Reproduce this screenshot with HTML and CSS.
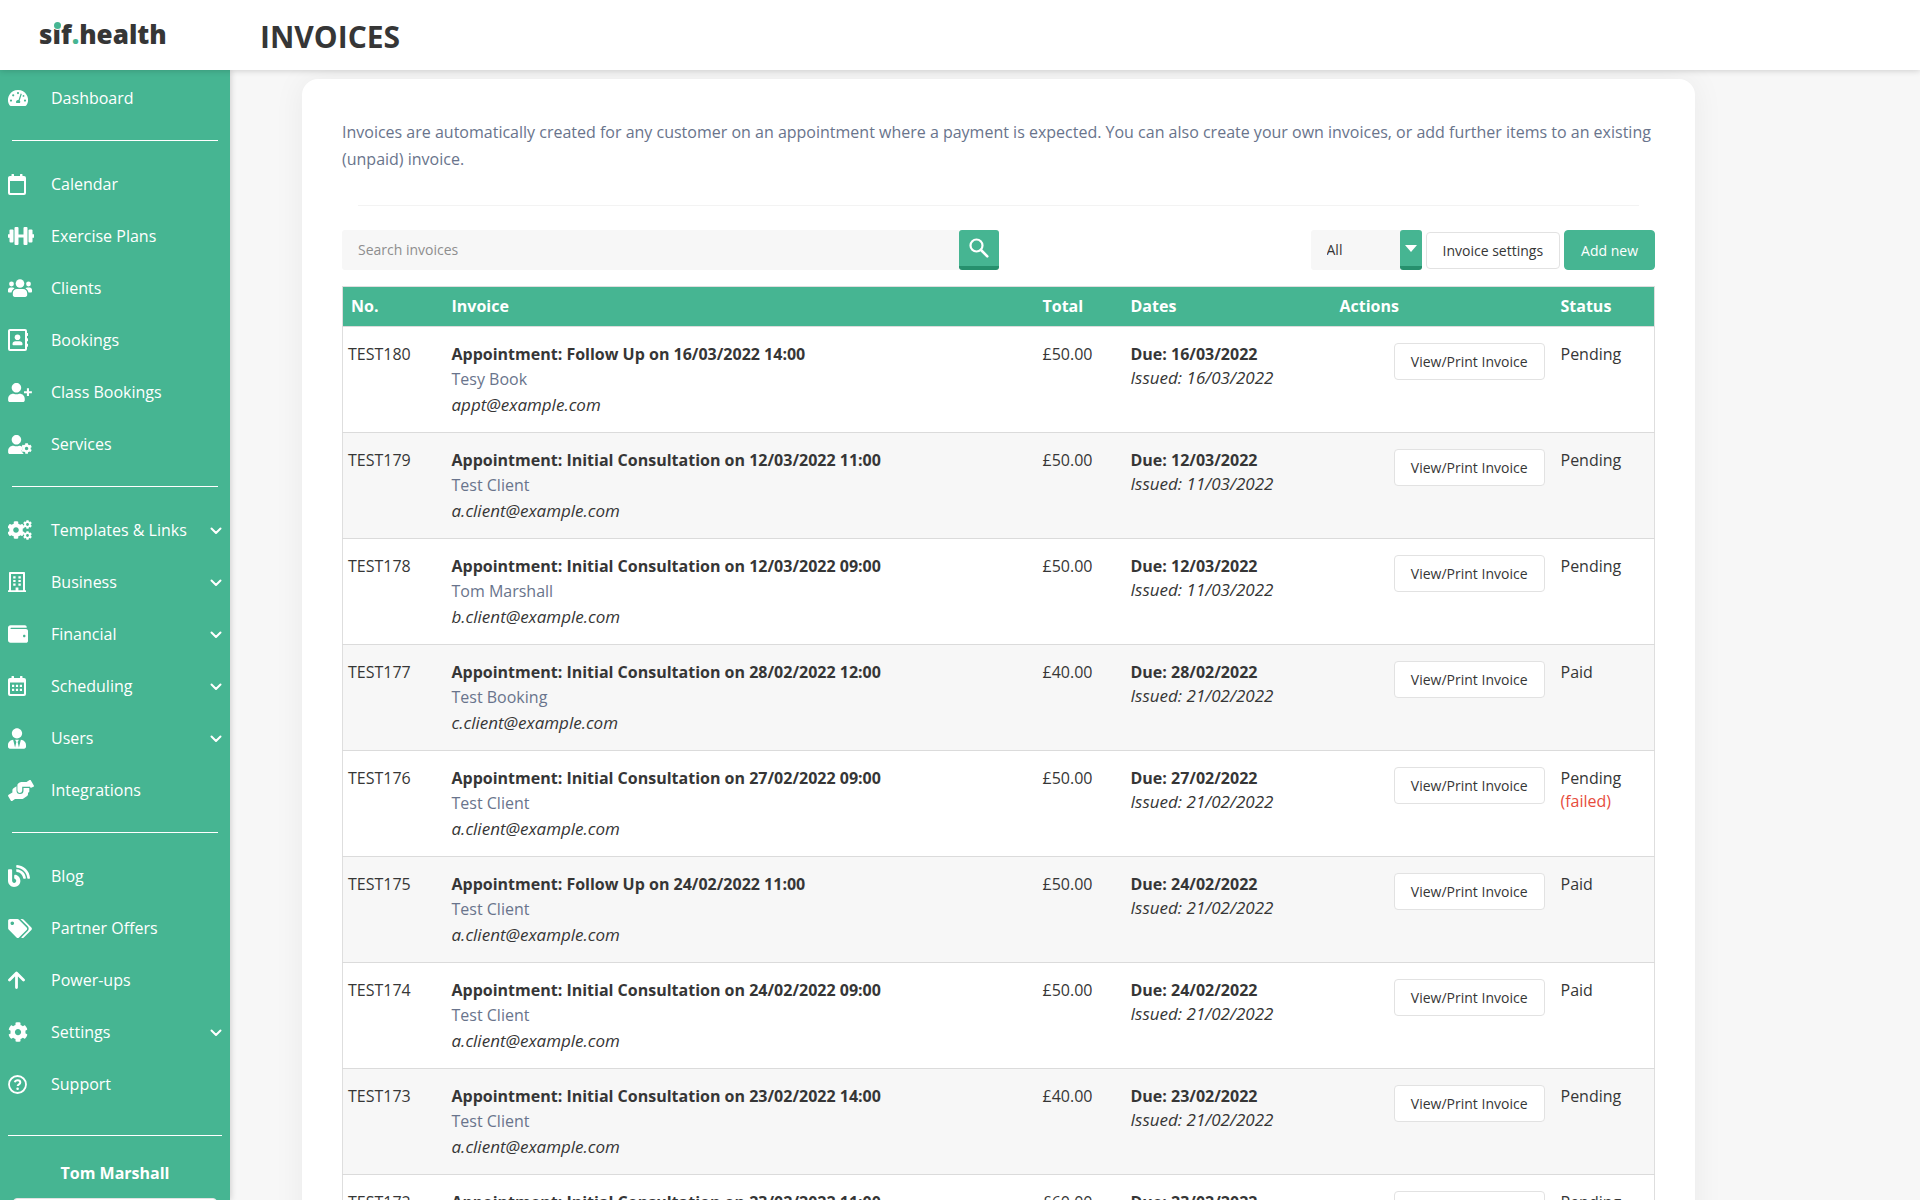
FILE: index.html
```
<!DOCTYPE html>
<html lang="en">
<head>
    <meta charset="UTF-8">
    <meta name="viewport" content="width=device-width, initial-scale=1.0">
    <title>Invoices - sif.health</title>
    <link rel="stylesheet" href="styles.css">
</head>
<body>
    <!-- Shared icon shapes -->
    <svg class="icon-defs" aria-hidden="true">
        <symbol id="i-cog" viewBox="0 0 512 512"><path d="M487.4 315.7l-42.6-24.6c4.3-23.2 4.3-47 0-70.2l42.6-24.6c4.9-2.8 7.1-8.6 5.5-14-11.1-35.6-30-67.8-54.7-94.6-3.8-4.1-10-5.1-14.8-2.3L380.8 110c-17.9-15.4-38.5-27.3-60.8-35.1V25.8c0-5.6-3.9-10.5-9.4-11.7-36.7-8.2-74.3-7.8-109.2 0-5.5 1.2-9.4 6.1-9.4 11.7V75c-22.2 7.9-42.8 19.8-60.8 35.1L88.7 85.5c-4.9-2.8-11-1.9-14.8 2.3-24.7 26.7-43.6 58.9-54.7 94.6-1.7 5.4.6 11.2 5.5 14L67.3 221c-4.3 23.2-4.3 47 0 70.2l-42.6 24.6c-4.9 2.8-7.1 8.6-5.5 14 11.1 35.6 30 67.8 54.7 94.6 3.8 4.1 10 5.1 14.8 2.3l42.6-24.6c17.9 15.4 38.5 27.3 60.8 35.1v49.2c0 5.6 3.9 10.5 9.4 11.7 36.7 8.2 74.3 7.8 109.2 0 5.5-1.2 9.4-6.1 9.4-11.7v-49.2c22.2-7.9 42.8-19.8 60.8-35.1l42.6 24.6c4.9 2.8 11 1.9 14.8-2.3 24.7-26.7 43.6-58.9 54.7-94.6 1.5-5.5-.7-11.3-5.6-14.1zM256 336c-44.1 0-80-35.9-80-80s35.9-80 80-80 80 35.9 80 80-35.9 80-80 80z"/></symbol>
        <symbol id="i-chevron" viewBox="0 0 12 8"><path d="M1.5 1.5L6 6l4.500-4.500" fill="none" stroke="currentColor" stroke-width="2" stroke-linecap="round" stroke-linejoin="round"/></symbol>
    </svg>

    <!-- Header -->
    <header class="app-header">
        <a href="#" class="logo">s<span class="logo-i">i</span>f<span class="logo-dot">.</span>health</a>
        <h1>INVOICES</h1>
    </header>

    <div class="layout">
        <!-- Sidebar -->
        <nav class="sidebar">
            <a href="#" class="nav-item">
                <svg width="20" height="16" viewBox="0 0 20 16"><path fill-rule="evenodd" d="M10 0a10 10 0 0 1 8.600 15.100c-.4.6-.8.9-1.400.9H2.800c-.6 0-1-.3-1.400-.9A10 10 0 0 1 10 0zM10 2a1.100 1.100 0 1 0 0 2.200 1.100 1.100 0 0 0 0-2.200zM5.200 4.200a1.100 1.100 0 1 0 0 2.200 1.100 1.100 0 0 0 0-2.200zM3 9.500a1.100 1.100 0 1 0 0 2.200 1.100 1.100 0 0 0 0-2.200zM17 9.500a1.100 1.100 0 1 0 0 2.200 1.100 1.100 0 0 0 0-2.200zM15.500 5a.9.9 0 1 0 0 1.800.9.9 0 0 0 0-1.800zM12.700 3.600l-2.200 6.500A2 2 0 0 0 8.300 13h3.600a2 2 0 0 0-.2-2.500L13.800 4z"/></svg>
                <span>Dashboard</span>
            </a>
            <hr>
            <a href="#" class="nav-item">
                <svg width="18" height="21" viewBox="0 0 18 21"><path fill-rule="evenodd" d="M4 0h1.500c.3 0 .5.2.5.5V2h6V.5c0-.3.2-.5.500-.5H14c.3 0 .5.2.5.5V2H16a2 2 0 0 1 2 2v15a2 2 0 0 1-2 2H2a2 2 0 0 1-2-2V4c0-1.100.9-2 2-2h1.500V.5c0-.3.200-.5.500-.5zM2 7v11.600c0 .2.200.4.400.4h13.200c.2 0 .4-.2.400-.4V7z"/></svg>
                <span>Calendar</span>
            </a>
            <a href="#" class="nav-item">
                <svg width="26" height="18" viewBox="0 0 26 18"><rect x="0" y="7" width="2" height="4" rx="1"/><rect x="1.500" y="2.500" width="4" height="13" rx="1"/><rect x="6.500" y="0" width="4" height="18" rx="1"/><rect x="10" y="7.500" width="6" height="3"/><rect x="15.500" y="0" width="4" height="18" rx="1"/><rect x="20.500" y="2.500" width="4" height="13" rx="1"/><rect x="24" y="7" width="2" height="4" rx="1"/></svg>
                <span>Exercise Plans</span>
            </a>
            <a href="#" class="nav-item">
                <svg width="24" height="18" viewBox="0 0 24 18"><circle cx="12" cy="4.500" r="4.300"/><circle cx="3.500" cy="5" r="2.400"/><circle cx="20.500" cy="5" r="2.400"/><path d="M9 10h6c2.500 0 4.200 1.800 4.200 4.200v1.600c0 1.300-.8 2.200-2 2.200H6.800c-1.200 0-2-.9-2-2.200v-1.600C4.800 11.800 6.500 10 9 10zM2.400 8.600h2.200c.8 0 1.400.3 1.900.8-1.800 1-2.800 2.500-3 4.200H1.200c-.7 0-1.200-.5-1.200-1.200V11c0-1.300 1.100-2.400 2.400-2.400zM21.600 8.600c1.300 0 2.400 1.100 2.400 2.400v1.400c0 .7-.5 1.200-1.200 1.200h-2.300c-.2-1.700-1.200-3.200-3-4.200.5-.5 1.100-.8 1.900-.8z"/></svg>
                <span>Clients</span>
            </a>
            <a href="#" class="nav-item">
                <svg width="20" height="22" viewBox="0 0 20 22"><path fill-rule="evenodd" d="M2 0h15a2 2 0 0 1 2 2v2h.6c.2 0 .4.2.4.400v2.200c0 .2-.2.400-.4.400H19v2.300h.6c.2 0 .4.200.4.400v2.200c0 .2-.2.400-.4.400H19v2.400h.6c.2 0 .4.200.4.400v2.200c0 .2-.2.400-.4.400H19V20a2 2 0 0 1-2 2H2a2 2 0 0 1-2-2V2C0 .9.900 0 2 0zM2 2v18h15V2z"/><circle cx="9.500" cy="8.200" r="2.800"/><path d="M4.500 15.500v-.8c0-1.500 1.300-2.500 2.800-2.500h4.400c1.500 0 2.800 1 2.800 2.500v.8c0 .4-.4.700-.9.700H5.400c-.5 0-.9-.3-.9-.7z"/></svg>
                <span>Bookings</span>
            </a>
            <a href="#" class="nav-item">
                <svg width="24" height="19" viewBox="0 0 640 512"><path d="M224 256c70.700 0 128-57.300 128-128S294.700 0 224 0 96 57.300 96 128s57.300 128 128 128zm89.600 32h-16.700c-22.200 10.200-46.900 16-72.900 16s-50.600-5.800-72.900-16h-16.700C60.200 288 0 348.200 0 422.400V464c0 26.500 21.500 48 48 48h352c26.500 0 48-21.500 48-48v-41.600c0-74.200-60.200-134.400-134.400-134.400z"/><path d="M506 144h56v76h78v56h-78v76h-56v-76h-78v-56h78z"/></svg>
                <span>Class Bookings</span>
            </a>
            <a href="#" class="nav-item">
                <svg width="24" height="19" viewBox="0 0 640 512"><path d="M224 256c70.700 0 128-57.300 128-128S294.700 0 224 0 96 57.300 96 128s57.300 128 128 128zm89.600 32h-16.700c-22.200 10.200-46.900 16-72.900 16s-50.600-5.800-72.900-16h-16.700C60.200 288 0 348.200 0 422.400V464c0 26.500 21.500 48 48 48h375c-25-20-42-42-57-72-14-24 2-42 30-58-5-22-5-34 0-44l-30-24c-16-14-34-26-52.400-26z"/><use href="#i-cog" x="350" y="215" width="295" height="295"/></svg>
                <span>Services</span>
            </a>
            <hr>
            <a href="#" class="nav-item">
                <svg width="24" height="20" viewBox="0 0 24 20"><use href="#i-cog" x="-1" y="1" width="18" height="18"/><use href="#i-cog" x="15" y="0" width="9" height="9"/><use href="#i-cog" x="15" y="11" width="9" height="9"/></svg>
                <span>Templates &amp; Links</span>
                <svg class="chevron" width="12" height="8"><use href="#i-chevron"/></svg>
            </a>
            <a href="#" class="nav-item">
                <svg width="18" height="20" viewBox="0 0 18 20"><path fill-rule="evenodd" d="M2 0h14c.6 0 1 .4 1 1v17.200h.6c.2 0 .4.200.4.400V20H0v-1.400c0-.2.200-.4.400-.4H1V1c0-.6.400-1 1-1zM3 2v16.200h4.600V15.500h2.800v2.700H15V2z"/><path d="M5.200 4.200h2.400v2.200H5.200zM10.400 4.200h2.400v2.200h-2.400zM5.200 7.900h2.400v2.200H5.200zM10.400 7.900h2.400v2.200h-2.400zM5.200 11.600h2.400v2.200H5.200zM10.400 11.600h2.400v2.200h-2.400z"/></svg>
                <span>Business</span>
                <svg class="chevron" width="12" height="8"><use href="#i-chevron"/></svg>
            </a>
            <a href="#" class="nav-item">
                <svg width="20" height="20" viewBox="0 0 512 512"><path d="M461.200 128H80c-8.840 0-16-7.160-16-16s7.160-16 16-16h384c8.840 0 16-7.160 16-16 0-26.510-21.490-48-48-48H64C28.650 32 0 60.650 0 96v320c0 35.350 28.650 64 64 64h397.200c28.020 0 50.800-21.530 50.800-48V176c0-26.470-22.780-48-50.800-48zM416 336c-17.670 0-32-14.330-32-32s14.330-32 32-32 32 14.330 32 32-14.330 32-32 32z"/></svg>
                <span>Financial</span>
                <svg class="chevron" width="12" height="8"><use href="#i-chevron"/></svg>
            </a>
            <a href="#" class="nav-item">
                <svg width="18" height="20" viewBox="0 0 18 20"><path fill-rule="evenodd" d="M4 0h1.500c.3 0 .5.2.5.5V2h6V.5c0-.3.200-.5.500-.5H14c.3 0 .5.200.5.5V2H16a2 2 0 0 1 2 2v14a2 2 0 0 1-2 2H2a2 2 0 0 1-2-2V4c0-1.100.900-2 2-2h1.500V.5c0-.3.200-.5.500-.5zM2 6.500v11.100c0 .2.200.4.400.4h13.200c.2 0 .4-.2.400-.4V6.500z"/><path d="M4 8.800h2.200V11H4zM7.900 8.800h2.200V11H7.900zM11.800 8.800H14V11h-2.200zM4 12.800h2.200V15H4zM7.900 12.800h2.200V15H7.900zM11.800 12.800H14V15h-2.200z"/></svg>
                <span>Scheduling</span>
                <svg class="chevron" width="12" height="8"><use href="#i-chevron"/></svg>
            </a>
            <a href="#" class="nav-item">
                <svg width="18" height="21" viewBox="0 0 448 512"><path d="M224 256c70.700 0 128-57.300 128-128S294.700 0 224 0 96 57.300 96 128s57.300 128 128 128zm95.800 32.600L272 480l-32-136 32-56h-96l32 56-32 136-47.800-191.400C56.900 292 0 350.300 0 422.400V464c0 26.500 21.500 48 48 48h352c26.500 0 48-21.500 48-48v-41.600c0-72.100-56.900-130.400-128.200-133.800z"/></svg>
                <span>Users</span>
                <svg class="chevron" width="12" height="8"><use href="#i-chevron"/></svg>
            </a>
            <a href="#" class="nav-item">
                <svg width="26" height="21" viewBox="0 0 26 21"><path d="M8.500 6.200L5.800 8c-.9.6-1.400 1.500-1.400 2.600v2L.6 14.800c-.5.300-.7.900-.4 1.400l2.700 4.500c.3.400.9.500 1.300.2L7 19h6.500c.7 0 1.400-.2 2-.6l3.600-2.500c.6-.4.900-1 .9-1.700v-1.600h.3c.6 0 1-.5 1-1V8h-5.800v2.500a3.500 3.500 0 0 1-7 0z"/><path d="M25.800 5.500l-2.900-5c-.3-.5-.9-.600-1.300-.4L18.500 2h-5.200c-.6 0-1.200.2-1.700.5L10.200 3.500c-.5.400-.8.900-.8 1.500v5.500a2.400 2.400 0 0 0 4.800 0V6.800h7.200c.7 0 1.200.5 1.200 1.200l2.900-1.200c.5-.3.600-.8.300-1.300z"/></svg>
                <span>Integrations</span>
            </a>
            <hr>
            <a href="#" class="nav-item">
                <svg width="22" height="22" viewBox="0 0 512 512"><path d="M172.200 226.800c-14.600-2.900-28.200 8.900-28.200 23.800V301c0 10.200 7.100 18.400 16.700 22 18.200 6.800 31.300 24.400 31.300 45 0 26.500-21.500 48-48 48s-48-21.500-48-48V120c0-13.300-10.700-24-24-24H24c-13.300 0-24 10.700-24 24v248c0 89.500 82.100 160.200 175 140.700 54.400-11.400 98.300-55.400 109.700-109.700 17.400-82.900-37-157.200-112.500-172.200zM209 0c-9.200-.5-17 6.800-17 16v31.600c0 8.500 6.600 15.500 15 15.900 129.400 7 233.400 112 240.900 241.500.5 8.400 7.500 15 15.900 15h32.100c9.200 0 16.500-7.800 16-17C503.400 139.800 372.200 8.600 209 0zm.3 96c-9.300-.7-17.300 6.700-17.300 16.100v32.100c0 8.400 6.500 15.300 14.800 15.900 76.800 6.300 138 68.200 144.900 145.200.8 8.300 7.600 14.700 15.900 14.700h32.200c9.300 0 16.800-8 16.100-17.300-8.400-110.100-96.500-198.200-206.600-206.700z"/></svg>
                <span>Blog</span>
            </a>
            <a href="#" class="nav-item">
                <svg width="24" height="19" viewBox="0 0 640 512"><path d="M497.941 225.941L286.059 14.059A48 48 0 0 0 252.118 0H48C21.490 0 0 21.490 0 48v204.118a48 48 0 0 0 14.059 33.941l211.882 211.882c18.744 18.745 49.136 18.746 67.882 0l204.118-204.118c18.745-18.745 18.745-49.137 0-67.882zM112 160c-26.510 0-48-21.490-48-48s21.490-48 48-48 48 21.490 48 48-21.490 48-48 48zm513.941 133.823L421.823 497.941c-18.745 18.745-49.137 18.745-67.882 0l-.36-.36L527.640 323.522c16.999-16.999 26.360-39.600 26.360-63.640s-9.362-46.641-26.360-63.640L331.397 0h48.721a48 48 0 0 1 33.941 14.059l211.882 211.882c18.745 18.745 18.745 49.137 0 67.882z"/></svg>
                <span>Partner Offers</span>
            </a>
            <a href="#" class="nav-item">
                <svg width="17" height="18" viewBox="0 0 17 18"><path d="M1.500 9l7-7 7 7M8.500 2.500v14" fill="none" stroke="currentColor" stroke-width="2.800" stroke-linecap="round" stroke-linejoin="round"/></svg>
                <span>Power-ups</span>
            </a>
            <a href="#" class="nav-item">
                <svg width="20" height="20"><use href="#i-cog"/></svg>
                <span>Settings</span>
                <svg class="chevron" width="12" height="8"><use href="#i-chevron"/></svg>
            </a>
            <a href="#" class="nav-item">
                <svg width="19" height="19" viewBox="0 0 19 19"><circle cx="9.500" cy="9.500" r="8.500" fill="none" stroke="currentColor" stroke-width="1.800"/><path d="M6.800 7.300c.4-1.400 1.400-2.100 2.800-2.100 1.500 0 2.700.9 2.700 2.300 0 1.900-2.600 1.900-2.600 3.600" fill="none" stroke="currentColor" stroke-width="2"/><circle cx="9.600" cy="13.700" r="1.300"/></svg>
                <span>Support</span>
            </a>
            <div class="user-box">
                <strong>Tom Marshall</strong>
                <button type="button" class="btn">Log out</button>
            </div>
        </nav>

        <!-- Main content -->
        <main class="content">
            <section class="card">
                <p class="intro">Invoices are automatically created for any customer on an appointment where a payment is expected. You can also create your own invoices, or add further items to an existing (unpaid) invoice.</p>
                <hr>
                <div class="toolbar">
                    <form class="search">
                        <input type="text" placeholder="Search invoices" aria-label="Search invoices">
                        <button type="button" aria-label="Search">
                            <svg width="20" height="20" viewBox="0 0 20 20"><circle cx="7.500" cy="7.500" r="6" fill="none" stroke="currentColor" stroke-width="2.200"/><path d="M12 12l6.300 6.300" stroke="currentColor" stroke-width="2.600" stroke-linecap="round"/></svg>
                        </button>
                    </form>
                    <div class="toolbar-actions">
                        <div class="select">
                            <select aria-label="Filter by status">
                                <option>All</option>
                                <option>Pending</option>
                                <option>Paid</option>
                            </select>
                            <span class="select-arrow"></span>
                        </div>
                        <button type="button" class="btn">Invoice settings</button>
                        <button type="button" class="btn btn-primary">Add new</button>
                    </div>
                </div>

                <table class="invoices">
                    <colgroup>
                        <col class="col-no">
                        <col>
                        <col class="col-total">
                        <col class="col-dates">
                        <col class="col-actions">
                        <col class="col-status">
                    </colgroup>
                    <thead>
                        <tr><th>No.</th><th>Invoice</th><th>Total</th><th>Dates</th><th>Actions</th><th>Status</th></tr>
                    </thead>
                    <tbody>
                        <tr>
                            <td>TEST180</td>
                            <td><strong>Appointment: Follow Up on 16/03/2022 14:00</strong><span class="client">Tesy Book</span><em>appt@example.com</em></td>
                            <td>£50.00</td>
                            <td class="dates"><strong>Due: 16/03/2022</strong><em>Issued: 16/03/2022</em></td>
                            <td class="actions"><button type="button" class="btn">View/Print Invoice</button></td>
                            <td>Pending</td>
                        </tr>
                        <tr>
                            <td>TEST179</td>
                            <td><strong>Appointment: Initial Consultation on 12/03/2022 11:00</strong><span class="client">Test Client</span><em>a.client@example.com</em></td>
                            <td>£50.00</td>
                            <td class="dates"><strong>Due: 12/03/2022</strong><em>Issued: 11/03/2022</em></td>
                            <td class="actions"><button type="button" class="btn">View/Print Invoice</button></td>
                            <td>Pending</td>
                        </tr>
                        <tr>
                            <td>TEST178</td>
                            <td><strong>Appointment: Initial Consultation on 12/03/2022 09:00</strong><span class="client">Tom Marshall</span><em>b.client@example.com</em></td>
                            <td>£50.00</td>
                            <td class="dates"><strong>Due: 12/03/2022</strong><em>Issued: 11/03/2022</em></td>
                            <td class="actions"><button type="button" class="btn">View/Print Invoice</button></td>
                            <td>Pending</td>
                        </tr>
                        <tr>
                            <td>TEST177</td>
                            <td><strong>Appointment: Initial Consultation on 28/02/2022 12:00</strong><span class="client">Test Booking</span><em>c.client@example.com</em></td>
                            <td>£40.00</td>
                            <td class="dates"><strong>Due: 28/02/2022</strong><em>Issued: 21/02/2022</em></td>
                            <td class="actions"><button type="button" class="btn">View/Print Invoice</button></td>
                            <td>Paid</td>
                        </tr>
                        <tr>
                            <td>TEST176</td>
                            <td><strong>Appointment: Initial Consultation on 27/02/2022 09:00</strong><span class="client">Test Client</span><em>a.client@example.com</em></td>
                            <td>£50.00</td>
                            <td class="dates"><strong>Due: 27/02/2022</strong><em>Issued: 21/02/2022</em></td>
                            <td class="actions"><button type="button" class="btn">View/Print Invoice</button></td>
                            <td>Pending <span class="failed">(failed)</span></td>
                        </tr>
                        <tr>
                            <td>TEST175</td>
                            <td><strong>Appointment: Follow Up on 24/02/2022 11:00</strong><span class="client">Test Client</span><em>a.client@example.com</em></td>
                            <td>£50.00</td>
                            <td class="dates"><strong>Due: 24/02/2022</strong><em>Issued: 21/02/2022</em></td>
                            <td class="actions"><button type="button" class="btn">View/Print Invoice</button></td>
                            <td>Paid</td>
                        </tr>
                        <tr>
                            <td>TEST174</td>
                            <td><strong>Appointment: Initial Consultation on 24/02/2022 09:00</strong><span class="client">Test Client</span><em>a.client@example.com</em></td>
                            <td>£50.00</td>
                            <td class="dates"><strong>Due: 24/02/2022</strong><em>Issued: 21/02/2022</em></td>
                            <td class="actions"><button type="button" class="btn">View/Print Invoice</button></td>
                            <td>Paid</td>
                        </tr>
                        <tr>
                            <td>TEST173</td>
                            <td><strong>Appointment: Initial Consultation on 23/02/2022 14:00</strong><span class="client">Test Client</span><em>a.client@example.com</em></td>
                            <td>£40.00</td>
                            <td class="dates"><strong>Due: 23/02/2022</strong><em>Issued: 21/02/2022</em></td>
                            <td class="actions"><button type="button" class="btn">View/Print Invoice</button></td>
                            <td>Pending</td>
                        </tr>
                        <tr>
                            <td>TEST172</td>
                            <td><strong>Appointment: Initial Consultation on 23/02/2022 11:00</strong><span class="client">Test Client</span><em>a.client@example.com</em></td>
                            <td>£60.00</td>
                            <td class="dates"><strong>Due: 23/02/2022</strong><em>Issued: 21/02/2022</em></td>
                            <td class="actions"><button type="button" class="btn">View/Print Invoice</button></td>
                            <td>Pending</td>
                        </tr>
                    </tbody>
                </table>
            </section>
        </main>
    </div>
</body>
</html>
```
FILE: styles.css
```
* {
    box-sizing: border-box;
}

body {
    margin: 0;
    height: 100vh;
    display: flex;
    flex-direction: column;
    font-family: "Open Sans", sans-serif;
    font-size: 16px;
    color: #363636;
    background: #f7f7f7;
}

button, input, select {
    font-family: inherit;
    font-size: 14px;
    color: inherit;
}

svg {
    fill: currentColor;
}

.icon-defs {
    position: absolute;
    width: 0;
    height: 0;
}

/* Header */
.app-header {
    flex: none;
    height: 70px;
    display: flex;
    align-items: center;
    background: #fff;
    box-shadow: 0 1px 6px rgba(0, 0, 0, 0.16);
    z-index: 2;
}

.logo {
    width: 222px;
    margin-bottom: 2px;
    padding-left: 39px;
    font-size: 26px;
    font-weight: 800;
    line-height: 36px;
    color: #363636;
    text-decoration: none;
}

.logo-i {
    position: relative;
}

/* green dot over the i */
.logo-i::before {
    content: "";
    position: absolute;
    top: 6px;
    left: 50%;
    width: 7px;
    height: 7px;
    margin-left: -3px;
    border-radius: 50%;
    background: #46b592;
    box-shadow: 0 0 0 1px #fff;
}

.logo-dot {
    color: #46b592;
}

.app-header h1 {
    margin: 4px 0 0 38px;
    font-size: 30px;
    line-height: 40px;
}

.layout {
    flex: 1;
    min-height: 0;
    display: flex;
}

/* Sidebar */
.sidebar {
    flex: none;
    width: 230px;
    padding-top: 2px;
    overflow: hidden;
    color: #fff;
    background: #46b592;
    box-shadow: 1px 0 6px rgba(0, 0, 0, 0.16);
    z-index: 1;
}

.nav-item {
    display: grid;
    grid-template-columns: 43px 1fr 12px;
    align-items: center;
    height: 52px;
    padding: 0 8px;
    color: #fff;
    text-decoration: none;
}

.chevron {
    margin-top: 2px;
}

.sidebar hr {
    height: 1px;
    margin: 16px 12px 17px;
    border: 0;
    background: #fff;
}

.user-box {
    margin: 25px 8px 0;
    padding: 25px 5px 0;
    border-top: 1px solid #fff;
    text-align: center;
    line-height: 24px;
}

.user-box .btn {
    width: 100%;
    margin-top: 13px;
    color: #363636;
}

.user-box strong {
    display: block;
}

/* Main */
.content {
    flex: 1;
    min-width: 0;
    padding: 9px 225px 40px 72px;
    overflow-y: auto;
    scrollbar-width: none;
}

.card {
    padding: 40px;
    background: #fff;
    border-radius: 16px;
    box-shadow: 0 0 32px rgba(0, 0, 0, 0.06);
}

.intro {
    margin: 0;
    line-height: 27px;
    color: #69748c;
}

.card hr {
    height: 1px;
    margin: 32px 16px 24px;
    border: 0;
    background: #f3f3f3;
}

.toolbar,
.toolbar-actions,
.search {
    display: flex;
    align-items: center;
}

.toolbar {
    justify-content: space-between;
    margin-bottom: 16px;
}

.toolbar-actions {
    gap: 4px;
}

.search {
    width: 50%;
}

.search input {
    flex: 1;
    height: 40px;
    padding: 0 16px 2px;
    border: 0;
    border-radius: 3px 0 0 3px;
    background: #f7f7f7;
}

.search input::placeholder {
    color: #8e8e8e;
}

.search button {
    width: 40px;
    height: 40px;
    padding: 4px 0 0;
    border: 0;
    border-bottom: 4px solid #26906d;
    border-radius: 3px;
    color: #fff;
    background: #46b592;
}

.select {
    position: relative;
}

.select select {
    appearance: none;
    width: 111px;
    height: 40px;
    padding: 0 16px 2px;
    border: 0;
    border-radius: 3px;
    background: #f7f7f7;
}

.select-arrow {
    position: absolute;
    top: 0;
    right: 0;
    display: flex;
    align-items: center;
    justify-content: center;
    width: 22px;
    height: 40px;
    border-bottom: 4px solid #26906d;
    border-radius: 3px;
    background: #46b592;
    pointer-events: none;
}

.select-arrow::before {
    content: "";
    border: 6px solid transparent;
    border-top: 7px solid #fff;
    border-bottom: 0;
}

.btn {
    height: 37px;
    padding: 0 16px;
    border: 1px solid #e2e2e2;
    border-radius: 4px;
    background: #fff;
}

.btn-primary {
    height: 40px;
    border-color: #46b592;
    color: #fff;
    background: #46b592;
}

/* Invoice table */
.invoices {
    width: 100%;
    table-layout: fixed;
    border-collapse: collapse;
    border: 1px solid #dedede;
}

.col-no { width: 101px; }
.col-total { width: 88px; }
.col-dates { width: 209px; }
.col-actions { width: 221px; }
.col-status { width: 102px; }

.invoices th {
    height: 40px;
    padding: 0 8px 2px;
    text-align: left;
    color: #fff;
    background: #46b592;
}

.invoices td {
    padding: 15px 8px;
    vertical-align: top;
    line-height: 25px;
    border-top: 1px solid #dbdbdb;
}

.invoices td:first-child {
    padding-left: 5px;
}

.invoices tbody tr:nth-child(even) {
    background: #f7f7f7;
}

.invoices td strong,
.invoices td em,
.client,
.failed {
    display: block;
}

.invoices td em {
    font-size: 17px;
}

.client {
    color: #69748c;
}

.invoices .dates em,
.failed {
    line-height: 21px;
}

.failed {
    color: #e74c3c;
}

.invoices .actions {
    padding-top: 16px;
    text-align: right;
}
```
